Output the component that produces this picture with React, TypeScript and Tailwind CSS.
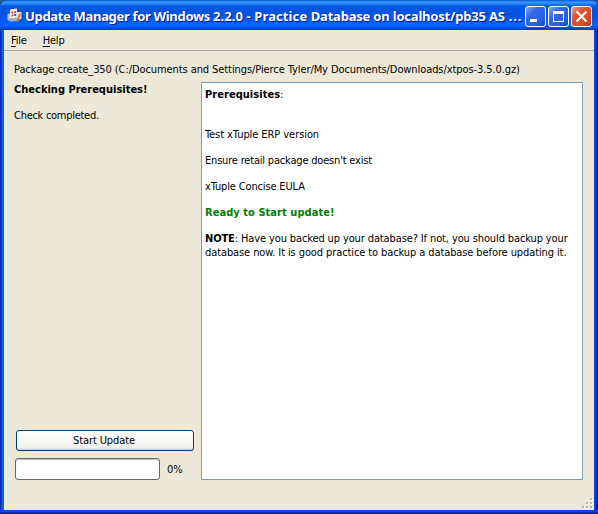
import React from "react";

function AppIcon() {
  return (
    <svg width="16" height="16" viewBox="0 0 16 16" className="shrink-0">
      <path d="M0.500 6l3-1v8l-3-1z" fill="#c2c4cc" />
      <path d="M3 1.500l7-1v9l-7 1z" fill="#fbf4f2" />
      <path d="M9 4h5.500v7l-5.500 1z" fill="#e3dcd6" />
      <path d="M3 10h7v3l-6 0.500-3-1z" fill="#a9aebb" />
      <path d="M4.500 3.500l1.500 2M4.500 8.500l2-2" fill="none" stroke="#d8484c" strokeWidth="1.400" />
      <path d="M7 3h2v2H7z" fill="#e0605a" />
      <path d="M7 6h2v2H7z" fill="#5a6c9c" />
      <path d="M13 6l-1.500 3.500-1 4" fill="none" stroke="#e8782c" strokeWidth="2" />
    </svg>
  );
}

function CaptionButton({ kind }: { kind: "min" | "max" | "close" }) {
  const fill =
    kind === "close"
      ? "bg-[linear-gradient(135deg,#f09b80_0%,#e0522b_35%,#df4a20_70%,#b93510_100%)]"
      : "bg-[linear-gradient(135deg,#7fa5f5_0%,#3467e4_35%,#2862e8_70%,#1647c4_100%)]";
  return (
    <button aria-label={kind} className={"h-[21px] w-[21px] rounded-[3px] border border-white " + fill}>
      <svg width="19" height="19" viewBox="0 0 19 19" shapeRendering={kind === "close" ? "auto" : "crispEdges"}>
        {kind === "min" && <path d="M4 12h7v3H4z" fill="#fff" />}
        {kind === "max" && <path d="M4 4h11v11H4zM5 7v7h9V7z" fill="#fff" fillRule="evenodd" />}
        {kind === "close" && <path d="M4.500 4.500l10 10M14.500 4.500l-10 10" stroke="#fff" strokeWidth="2.200" />}
      </svg>
    </button>
  );
}

function SizeGrip() {
  const dots = [[8, 0], [4, 4], [8, 4], [0, 8], [4, 8], [8, 8]];
  return (
    <svg width="12" height="12" shapeRendering="crispEdges">
      {dots.map(([x, y]) => (
        <g key={x + "-" + y}>
          <path d={`M${x + 1} ${y + 1}h2v2h-2z`} fill="#fff" />
          <path d={`M${x} ${y}h2v2h-2z`} fill="#b8b4a3" />
        </g>
      ))}
    </svg>
  );
}

export default function App() {
  return (
    <div className="h-[514px] w-[598px] overflow-hidden bg-[#1b5a91] font-['DejaVu_Sans_Condensed','DejaVu_Sans',sans-serif] text-[11px] leading-[13px] text-black [font-stretch:condensed]">
      <div className="flex h-full flex-col overflow-hidden rounded-t-[8px] bg-[linear-gradient(90deg,#001ea0_0,#0831d9_1px,#0855dd_2px,#166aee_3px,#0855dd_4px,#0044ee_592px,#0048f1_595px,#001ea0_597px,#00138c_598px)]">
        <header className="flex h-[30px] shrink-0 items-center bg-[linear-gradient(180deg,#0058c8_0,#3a93ff_2px,#2784f8_4px,#0058e6_6px,#0054e0_13px,#0060fb_23px,#0066ff_26px,#004bd5_28px,#003dc0_30px)] pl-[7px] pr-[6px] pt-[2px]">
          <AppIcon />
          <h1 className="ml-[2px] w-[503px] shrink-0 whitespace-nowrap font-['Noto_Sans',sans-serif] text-[13px] font-bold leading-[18px] tracking-[-0.2px] text-white [text-shadow:1px_1px_0_#0a1883]">
            <span className="tracking-[-0.32px]">Update Manager for Windows </span><span className="tracking-[0.1px]">2.2.0 - Practice </span>Database on localhost/pb35 AS<span className="tracking-[0.8px]"> ...</span>
          </h1>
          <div className="-ml-[3px] flex gap-[2px]">
            <CaptionButton kind="min" />
            <CaptionButton kind="max" />
            <CaptionButton kind="close" />
          </div>
        </header>
        <div className="ml-1 mr-1 flex min-h-0 flex-1 flex-col bg-[#ece9d8]">
          <nav className="flex h-[21px] shrink-0 items-center gap-4 border-b border-[#aca899] pl-[7px] tracking-[-0.2px]">
            <span><u className="underline-offset-2">F</u>ile</span>
            <span><u className="underline-offset-2">H</u>elp</span>
          </nav>
          <div className="mt-3 pl-[10px]">
            <p className="whitespace-nowrap tracking-[-0.085px]">Package create_350 (C:/Documents and Settings/Pierce Tyler/My Documents/Downloads/xtpos-3.5.0.gz)</p>
          </div>
          <main className="mt-[6px] flex h-[398px] pl-[10px]">
            <section className="flex w-[187px] flex-col">
              <p className="mt-px font-bold">Checking Prerequisites!</p>
              <p className="mt-[13px] tracking-[-0.28px]">Check completed.</p>
              <button className="mb-[7px] ml-[2px] mt-auto h-[21px] w-[178px] rounded-[3px] border border-[#003c74] bg-[linear-gradient(180deg,#fff_0,#f4f3ee_85%,#d8d0c4_100%)] pr-[2px] tracking-[-0.1px]">Start Update</button>
              <div className="flex items-center gap-[7px] pl-[1px]">
                <div className="h-[22px] w-[145px] rounded-[3px] border border-[#686868] bg-white shadow-[inset_0_1px_1px_#bebebe]" />
                <span>0%</span>
              </div>
            </section>
            <article className="w-[382px] border border-[#7f9db9] bg-white px-[3px] pt-[5px]">
              <p className="tracking-[0.04px]"><b>Prerequisites</b>:</p>
              <p className="mt-[27px] tracking-[-0.07px]">Test xTuple ERP version</p>
              <p className="mt-[13px] tracking-[-0.19px]">Ensure retail package doesn't exist</p>
              <p className="mt-[13px] tracking-[-0.15px]">xTuple Concise EULA</p>
              <p className="mt-[13px] font-bold tracking-[0.05px] text-[#008000]">Ready to Start update!</p>
              <div className="mt-[13px] whitespace-nowrap leading-[14px]">
                <p className="tracking-[-0.12px]"><b>NOTE</b>: Have you backed up your database? If not, you should backup your</p>
                <p className="tracking-[-0.1px]">database now. It is good practice to backup a database before updating it.</p>
              </div>
            </article>
          </main>
          <footer className="mt-auto flex justify-end pb-0"><SizeGrip /></footer>
        </div>
        <div className="h-1 shrink-0 bg-[linear-gradient(180deg,#0855dd_0,#0048f1_1px,#0040e0_2px,#001ea0_3px,#00138c_4px)]" />
      </div>
    </div>
  );
}
